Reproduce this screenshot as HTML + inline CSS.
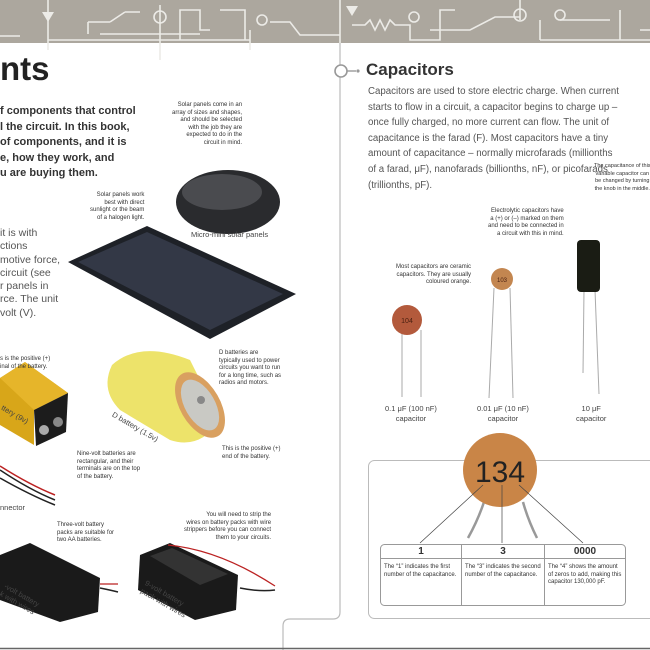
<!DOCTYPE html>
<html><head><meta charset="utf-8"><style>
body{margin:0;width:650px;height:650px;overflow:hidden;background:#fff;font-family:"Liberation Sans",sans-serif;position:relative}
.a{position:absolute;white-space:nowrap}
.cap{font-size:6px;color:#333;line-height:7.5px}
</style></head><body>
<svg class="a" style="left:0;top:0" width="650" height="650">
<rect x="0" y="0" width="650" height="43" fill="#aca79e"/>
<g stroke="#ecebe7" stroke-width="1.6" fill="none">
<path d="M0 36 H20 M48 0 V50 M48 40 H250 M100 34 H200 M88 34 V22 M88 22 H110 M110 22 L125 12 M125 12 H140 M160 5 V60 M150 34 H170 M180 40 V10 H200 V30 H210 M220 10 H245 V40 M250 30 V50 M270 22 H290 L300 35 H340 M340 0 V43 M352 25 H365 L370 20 L375 30 L380 20 L385 30 L390 20 L395 25 H410 V40 H440 V10 H455 M430 30 H470 L495 17 H520 M520 20 V0 M540 20 V40 M540 40 H650 M560 20 H610 M620 10 V40 M640 30 H650"/>
<circle cx="160" cy="17" r="6"/><circle cx="414" cy="17" r="5"/><circle cx="520" cy="15" r="6"/><circle cx="560" cy="15" r="5"/><circle cx="262" cy="20" r="5"/>
</g>
<path d="M340 43 V612 Q340 619 333 619 H290 Q283 619 283 626 V650" stroke="#bbb" stroke-width="1.2" fill="none"/>
<circle cx="341" cy="71" r="6" stroke="#999" stroke-width="1.6" fill="#fff"/>
<path d="M42 12 H54 L48 22 Z M346 6 H358 L352 16 Z" fill="#ecebe7"/>
<path d="M347 71 H356" stroke="#999" stroke-width="1.4"/><circle cx="358" cy="71" r="1.6" fill="#999"/>
<line x1="0" y1="648.5" x2="650" y2="648.5" stroke="#666" stroke-width="1.5"/>
<!-- solar round -->
<ellipse cx="228" cy="202" rx="52" ry="32" fill="#2a2b2e"/>
<ellipse cx="222" cy="192" rx="40" ry="18" fill="#4a4b4f"/>
<!-- rect panel -->
<polygon points="68,262 147,226 296,294 210,339" fill="#1e2127"/>
<polygon points="78,262 147,232 283,294 210,330" fill="#333846"/>
<!-- 9V battery -->
<polygon points="0,378 25,362 68,393 34,410 34,445 0,425" fill="#d8a619"/>
<polygon points="0,378 25,362 68,393 34,410" fill="#e6b52a"/>
<polygon points="34,410 68,393 66,432 36,446" fill="#1c1c1c"/>
<circle cx="44" cy="430" r="5" fill="#aaa"/><circle cx="58" cy="422" r="5" fill="#888"/>
<path d="M0 470 Q30 490 55 500 M0 478 Q30 495 55 505" stroke="#222" stroke-width="1.5" fill="none"/>
<path d="M0 466 Q30 485 55 495" stroke="#b22" stroke-width="1.5" fill="none"/>
<!-- D battery -->
<path d="M112 365 Q140 340 190 360 L220 420 Q200 450 170 440 L120 410 Q100 390 112 365Z" fill="#ede36a"/>
<ellipse cx="200" cy="405" rx="20" ry="36" transform="rotate(-30 200 405)" fill="#d9a060"/>
<ellipse cx="200" cy="405" rx="15" ry="28" transform="rotate(-30 200 405)" fill="#c9c9c4"/>
<circle cx="201" cy="400" r="4" fill="#888"/>
<!-- battery packs -->
<polygon points="0,555 30,543 100,578 98,612 60,622 0,600" fill="#1a1a1a"/>
<polygon points="140,555 170,543 238,575 236,610 195,620 138,590" fill="#1a1a1a"/>
<polygon points="150,556 172,548 228,574 200,585" fill="#333"/>
<path d="M100 588 Q110 590 118 592 M240 588 Q260 592 275 590" stroke="#222" stroke-width="1.5" fill="none"/>
<path d="M100 584 H118 M168 545 Q220 550 275 586" stroke="#b22" stroke-width="1.3" fill="none"/>
<!-- capacitors -->
<line x1="402" y1="330" x2="402" y2="397" stroke="#aaa"/><line x1="421" y1="330" x2="421" y2="397" stroke="#aaa"/>
<circle cx="407" cy="320" r="15" fill="#b35a3c"/>
<line x1="494" y1="288" x2="489" y2="398" stroke="#aaa"/><line x1="510" y1="288" x2="513" y2="398" stroke="#aaa"/>
<circle cx="502" cy="279" r="11" fill="#c38650"/>
<line x1="584" y1="290" x2="583" y2="373" stroke="#aaa"/><line x1="595" y1="290" x2="599" y2="394" stroke="#aaa"/>
<rect x="577" y="240" width="23" height="52" rx="4" fill="#1a1c14"/>
<!-- box -->
<rect x="368.5" y="460.5" width="300" height="158" rx="6" fill="none" stroke="#bbb"/>
<rect x="380.5" y="544.5" width="245" height="61" rx="4" fill="#fff" stroke="#999"/>
<line x1="381" y1="558.5" x2="625" y2="558.5" stroke="#999"/>
<line x1="461.5" y1="545" x2="461.5" y2="605" stroke="#999"/><line x1="544.5" y1="545" x2="544.5" y2="605" stroke="#999"/>
<path d="M484 502 Q478 520 468 538 M523 502 Q528 520 537 538" stroke="#999" stroke-width="2.5" fill="none"/>
<circle cx="500" cy="470" r="37" fill="#c98547"/>
<path d="M483 485 L420 543 M502 485 V543 M519 485 L583 543" stroke="#444" stroke-width="0.7"/>
<text x="500" y="482" font-size="30" text-anchor="middle" fill="#222" font-family="Liberation Sans">134</text>
<text x="407" y="323" font-size="7" text-anchor="middle" fill="#4a2010">104</text>
<text x="502" y="282" font-size="6" text-anchor="middle" fill="#4a2010">103</text>
</svg>
<div class="a" style="left:0;top:50px;font-size:33px;font-weight:bold;color:#222">nts</div>
<div class="a" style="left:0;top:104px;font-size:11px;font-weight:bold;color:#333;line-height:15.5px">f components that control<br>l the circuit. In this book,<br>of components, and it is<br>e, how they work, and<br>u are buying them.</div>
<div class="a" style="left:0;top:227px;font-size:10.5px;color:#555;line-height:13.3px">it is with<br>ctions<br>motive force,<br>circuit (see<br>r panels in<br>rce. The unit<br>volt (V).</div>
<div class="a" style="left:366px;top:60px;font-size:17px;font-weight:bold;color:#333">Capacitors</div>
<div class="a" style="left:368px;top:84px;font-size:9.7px;color:#555;line-height:15.6px">Capacitors are used to store electric charge. When current<br>starts to flow in a circuit, a capacitor begins to charge up –<br>once fully charged, no more current can flow. The unit of<br>capacitance is the farad (F). Most capacitors have a tiny<br>amount of capacitance – normally microfarads (millionths<br>of a farad, μF), nanofarads (billionths, nF), or picofarads<br>(trillionths, pF).</div>
<div class="a cap" style="left:172px;top:102px;text-align:right">Solar panels come in an<br>array of sizes and shapes,<br>and should be selected<br>with the job they are<br>expected to do in the<br>circuit in mind.</div>
<div class="a cap" style="left:90px;top:192px;text-align:right">Solar panels work<br>best with direct<br>sunlight or the beam<br>of a halogen light.</div>
<div class="a" style="left:191px;top:230px;font-size:7.5px;color:#444">Micro-mini solar panels</div>
<div class="a cap" style="left:0;top:356px">s is the positive (+)<br>inal of the battery.</div>
<div class="a cap" style="left:219px;top:350px">D batteries are<br>typically used to power<br>circuits you want to run<br>for a long time, such as<br>radios and motors.</div>
<div class="a cap" style="left:222px;top:446px">This is the positive (+)<br>end of the battery.</div>
<div class="a cap" style="left:77px;top:451px">Nine-volt batteries are<br>rectangular, and their<br>terminals are on the top<br>of the battery.</div>
<div class="a" style="left:0;top:503px;font-size:7.5px;color:#444">nnector</div>
<div class="a cap" style="left:57px;top:522px">Three-volt battery<br>packs are suitable for<br>two AA batteries.</div>
<div class="a cap" style="left:184px;top:512px;text-align:right">You will need to strip the<br>wires on battery packs with wire<br>strippers before you can connect<br>them to your circuits.</div>
<div class="a" style="left:115px;top:410px;font-size:7.5px;color:#444;transform:rotate(30deg);transform-origin:left top">D battery (1.5v)</div>
<div class="a" style="left:0;top:410px;font-size:7.5px;color:#444;transform:rotate(30deg)">ttery (9v)</div>
<div class="a" style="left:140px;top:590px;font-size:7.5px;color:#444;transform:rotate(30deg);line-height:9px">9-volt battery<br>pack with wires</div>
<div class="a" style="left:0;top:590px;font-size:7.5px;color:#444;transform:rotate(30deg);line-height:9px">-volt battery<br>k with wires</div>
<div class="a cap" style="left:594px;top:163px;text-align:center;font-size:5.5px">The capacitance of this<br>variable capacitor can<br>be changed by turning<br>the knob in the middle.</div>
<div class="a cap" style="left:488px;top:208px;text-align:right">Electrolytic capacitors have<br>a (+) or (–) marked on them<br>and need to be connected in<br>a circuit with this in mind.</div>
<div class="a cap" style="left:396px;top:264px;text-align:right">Most capacitors are ceramic<br>capacitors. They are usually<br>coloured orange.</div>
<div class="a" style="left:385px;top:404px;font-size:7.5px;color:#444;text-align:center;line-height:9.5px">0.1 μF (100 nF)<br>capacitor</div>
<div class="a" style="left:477px;top:404px;font-size:7.5px;color:#444;text-align:center;line-height:9.5px">0.01 μF (10 nF)<br>capacitor</div>
<div class="a" style="left:576px;top:404px;font-size:7.5px;color:#444;text-align:center;line-height:9.5px">10 μF<br>capacitor</div>
<div class="a" style="left:381px;top:546px;width:80px;text-align:center;font-size:10px;font-weight:bold;color:#333">1</div>
<div class="a" style="left:462px;top:546px;width:82px;text-align:center;font-size:10px;font-weight:bold;color:#333">3</div>
<div class="a" style="left:545px;top:546px;width:80px;text-align:center;font-size:10px;font-weight:bold;color:#333">0000</div>
<div class="a cap" style="left:384px;top:564px">The “1” indicates the first<br>number of the capacitance.</div>
<div class="a cap" style="left:465px;top:564px">The “3” indicates the second<br>number of the capacitance.</div>
<div class="a cap" style="left:548px;top:564px">The “4” shows the amount<br>of zeros to add, making this<br>capacitor 130,000 pF.</div>
</body></html>
